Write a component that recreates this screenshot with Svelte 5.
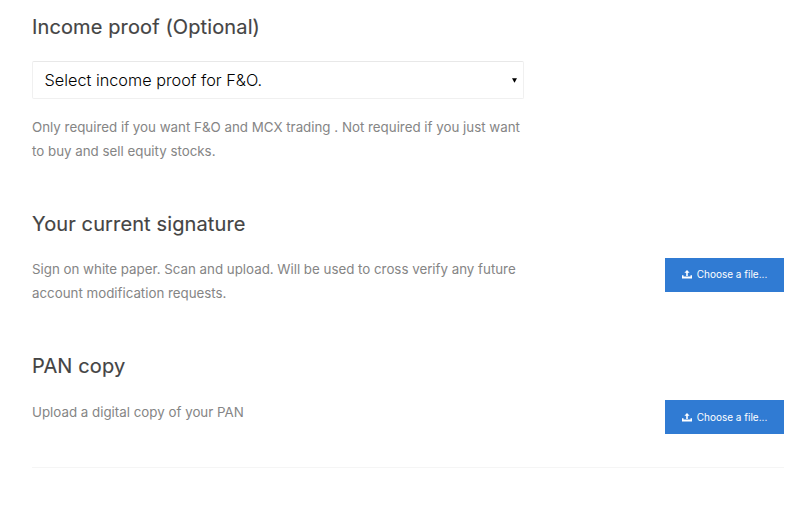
<script>
  const uploads = [
    {
      id: "signature",
      title: "Your current signature",
      hint: "Sign on white paper. Scan and upload. Will be used to cross verify any future account modification requests.",
    },
    {
      id: "pan",
      title: "PAN copy",
      hint: "Upload a digital copy of your PAN",
    },
  ];
</script>

<main>
  <section class="income">
    <h2>Income proof (Optional)</h2>
    <div class="select" role="combobox" aria-expanded="false" aria-controls="proofs" tabindex="0">
      <span>Select income proof for F&amp;O.</span>
      <svg width="5" height="5" viewBox="0 0 5 5"><path d="M0 .3h5L2.5 4.8z" /></svg>
    </div>
    <p>
      Only required if you want F&amp;O and MCX trading . Not required if you just want to buy and
      sell equity stocks.
    </p>
  </section>

  {#each uploads as item (item.id)}
    <section class={item.id}>
      <h2>{item.title}</h2>
      <div class="row">
        <p>{item.hint}</p>
        <button>
          <svg width="10" height="9" viewBox="0 0 10 9">
            <path d="M5 0l2.6 2.7H5.8V6H4.2V2.7H2.4z" />
            <path d="M0 5.2h1.5v1.4h7V5.2H10v3.3H0z" />
          </svg>
          Choose a file...
        </button>
      </div>
    </section>
  {/each}
</main>

<style>
  :global(body) {
    background: #fff;
  }

  main {
    padding: 12px 21px 0 32px;
    font-family: Inter, sans-serif;
    color: #444;
  }

  h2 {
    margin: 0;
    font-size: 20px;
    font-weight: 400;
    letter-spacing: 0.12px;
    line-height: 30px;
    -webkit-text-stroke: 0.15px #444;
  }

  p {
    margin: 0;
    width: 492px;
    font-size: 13.33px;
    line-height: 24px;
    color: #858585;
  }

  .income {
    height: 197px;
  }

  .select {
    box-sizing: border-box;
    display: flex;
    align-items: center;
    justify-content: space-between;
    width: 492px;
    height: 38px;
    margin: 19px 0 16px;
    padding: 0 6px 0 11.5px;
    border: 1px solid #f0f0f0;
    border-top-color: #e8e8e8;
    border-radius: 2px;
    font-size: 16.25px;
    font-weight: 300;
    color: #000;
  }

  .signature {
    height: 142px;
  }

  .row {
    display: flex;
    justify-content: space-between;
    align-items: flex-start;
    padding-top: 19px;
  }

  .signature p {
    margin-top: -1px;
    letter-spacing: -0.01px;
  }

  button {
    display: flex;
    align-items: center;
    justify-content: center;
    gap: 5px;
    width: 119px;
    height: 34px;
    padding: 0 0 2px;
    border: 0;
    background: #307bd3;
    color: #fff;
    font: 400 10px Inter, sans-serif;
  }

  button svg {
    fill: #fff;
  }

  .pan {
    height: 116px;
    border-bottom: 1px solid #f5f5f5;
  }

  .pan button {
    padding-bottom: 0;
  }
</style>
